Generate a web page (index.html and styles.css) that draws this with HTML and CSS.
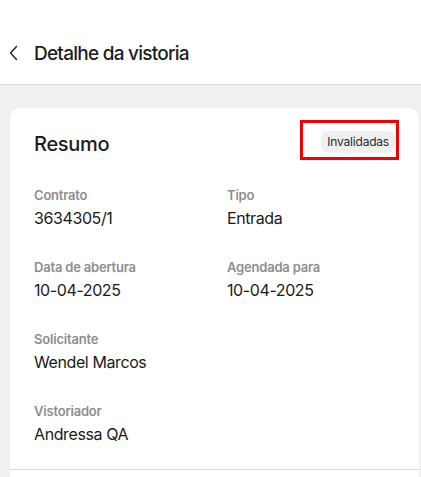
FILE: index.html
```html
<!DOCTYPE html>
<html lang="pt-BR">
<head>
<meta charset="utf-8">
<title>Detalhe da vistoria</title>
<link rel="stylesheet" href="styles.css">
</head>
<body>
<header class="topbar">
  <svg class="back" width="10" height="16" viewBox="0 0 10 16" aria-hidden="true"><path d="M7.5 1.5 L1.5 8 L7.5 14.5" fill="none" stroke="#222" stroke-width="1.4" stroke-linecap="round" stroke-linejoin="round"/></svg>
  <h1 class="title">Detalhe da vistoria</h1>
</header>
<main class="content">
  <section class="card">
    <div class="card-head">
      <h2 class="card-title">Resumo</h2>
      <div class="highlight"><span class="pill">Invalidadas</span></div>
    </div>
    <div class="fields">
      <div class="field"><div class="label">Contrato</div><div class="value">3634305/1</div></div>
      <div class="field"><div class="label">Tipo</div><div class="value">Entrada</div></div>
      <div class="field"><div class="label">Data de abertura</div><div class="value">10-04-2025</div></div>
      <div class="field"><div class="label">Agendada para</div><div class="value">10-04-2025</div></div>
      <div class="field full"><div class="label">Solicitante</div><div class="value">Wendel Marcos</div></div>
      <div class="field full"><div class="label">Vistoriador</div><div class="value">Andressa QA</div></div>
    </div>
  </section>
  <div class="card-next"></div>
</main>
</body>
</html>
```
FILE: styles.css
```css
* { box-sizing: border-box; }
html, body { margin: 0; padding: 0; }
body {
  font-family: Inter, "Noto Sans", sans-serif;
  color: #1c1c1c;
  background: #f0f0f0;
  width: 421px;
  height: 477px;
  overflow: hidden;
}
.topbar {
  height: 85px;
  background: #fff;
  border-bottom: 1px solid #d8d8d8;
  display: flex;
  align-items: center;
  padding: 22px 0 0 9px;
  gap: 15px;
}
.back { display: block; }
.title {
  margin: 0;
  font-size: 19px;
  font-weight: 500;
  letter-spacing: -0.75px;
  color: #1e1e1e;
}
.content {
  padding: 23px 2px 0 10px;
}
.card {
  background: #fff;
  border-radius: 10px 10px 0 0;
  padding: 12px 20px 23px 24px;
  border-bottom: 1px solid #d9d9d9;
}
.card-next {
  background: #fff;
  height: 20px;
}
.card-head {
  display: flex;
  justify-content: space-between;
  align-items: center;
  height: 40px;
}
.card-title {
  margin: 7px 0 0;
  font-size: 20px;
  font-weight: 500;
  letter-spacing: -0.3px;
  color: #1c1c1c;
}
.highlight {
  width: 99px;
  height: 40px;
  border: 3px solid #f00000;
  display: flex;
  align-items: center;
  justify-content: flex-end;
  padding: 4px 1px 0 0;
}
.pill {
  background: #efefef;
  color: #2a2a2a;
  font-size: 12px;
  letter-spacing: -0.2px;
  height: 22px;
  line-height: 22px;
  padding: 0 6px;
  border-radius: 8px;
}
.fields {
  margin-top: 26px;
  display: grid;
  grid-template-columns: 193px 1fr;
  row-gap: 28px;
}
.field.full { grid-column: 1 / -1; }
.label {
  font-size: 13px;
  line-height: 18px;
  font-weight: 600;
  color: #8e8e8e;
  letter-spacing: -0.2px;
}
.value {
  margin-top: 2px;
  font-size: 16px;
  line-height: 24px;
  color: #1a1a1a;
  letter-spacing: -0.4px;
}
```
